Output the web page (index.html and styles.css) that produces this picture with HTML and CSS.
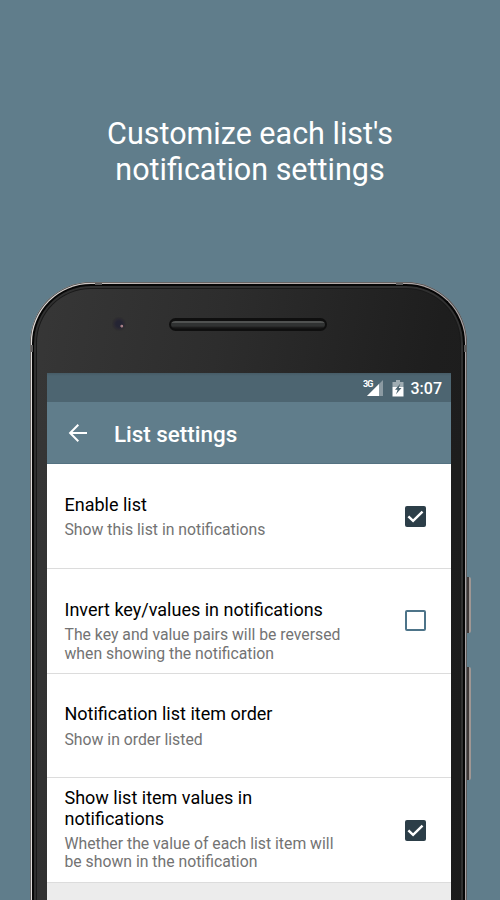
FILE: index.html
```html
<!DOCTYPE html>
<html lang="en">
<head>
<meta charset="utf-8">
<title>List settings</title>
<link rel="stylesheet" href="styles.css">
</head>
<body>
<main class="promo">
  <h1 class="headline">Customize each list's<br>notification settings</h1>
  <div class="phone">
    <span class="band band-top-left"></span><span class="band band-top-right"></span>
    <span class="band band-left"></span><span class="band band-right"></span>
    <span class="button power"></span><span class="button volume"></span>
    <div class="body">
      <div class="face">
        <div class="bezel">
          <span class="camera"></span>
          <span class="speaker"></span>
        </div>
        <div class="screen">
          <div class="status">
            <svg class="signal" viewBox="0 0 22 20"><text x="0" y="8.500" class="net" textLength="10.500">3G</text><path d="M20 2V18H4z" fill="#fff" opacity=".35"/><path d="M16 6V18H4z" fill="#fff"/></svg>
            <svg class="battery" viewBox="0 0 12 18"><path d="M.5 3H4V1H8V3H11.500V8H.5z" fill="#a0adb3"/><path d="M.5 8H11.500V17.500H.5z" fill="#fff"/><path d="M8.400 4.500 3 10.800H5.600L4 15.300 9.500 9.100H6.800z" fill="#4c6470"/></svg>
            <span class="time">3:07</span>
          </div>
          <header class="toolbar">
            <svg class="back" viewBox="0 0 20 20"><path d="M19 10H2.500M10.300 1.800 2.100 10 10.300 18.200" fill="none" stroke="#fff" stroke-width="2"/></svg>
            <span class="title">List settings</span>
          </header>
          <ul class="rows">
            <li class="row">
              <div class="text"><div class="name">Enable list</div><div class="desc">Show this list in notifications</div></div>
              <span class="box on"><svg viewBox="0 0 20 20"><path d="M3.200 9.800 7.700 14.200 16.700 5.300" fill="none" stroke="#fff" stroke-width="2.300"/></svg></span>
            </li>
            <li class="row">
              <div class="text"><div class="name">Invert key/values in notifications</div><div class="desc">The key and value pairs will be reversed<br>when showing the notification</div></div>
              <span class="box"></span>
            </li>
            <li class="row">
              <div class="text"><div class="name">Notification list item order</div><div class="desc">Show in order listed</div></div>
            </li>
            <li class="row tall">
              <div class="text"><div class="name">Show list item values in<br>notifications</div><div class="desc">Whether the value of each list item will<br>be shown in the notification</div></div>
              <span class="box on"><svg viewBox="0 0 20 20"><path d="M3.200 9.800 7.700 14.200 16.700 5.300" fill="none" stroke="#fff" stroke-width="2.300"/></svg></span>
            </li>
          </ul>
        </div>
      </div>
    </div>
  </div>
</main>
</body>
</html>
```
FILE: styles.css
```css
* { box-sizing: border-box; }
body { margin: 0; background: #607d8b; font-family: Roboto, sans-serif; }
.promo { height: 900px; overflow: hidden; }
.headline {
  margin: 0; padding-top: 116px; height: 282px;
  color: #fff; font-size: 30.500px; font-weight: 400; line-height: 36px; text-align: center;
}
.phone { position: relative; width: 437px; height: 700px; margin-left: 30px; }
.body {
  height: 100%; padding: 2px; border-radius: 61px 61px 0 0;
  background: linear-gradient(90deg, #e0dddb 0, #b3aaa8 30%, #b3aaa8 80%, #aaa4a6 100%);
  box-shadow: inset 0 0 0 .8px #4c4c4c;
}
.face {
  height: 100%; border: 2px solid #050505; border-bottom: 0; border-radius: 59px 59px 0 0;
  padding: 0 12px 0 12.500px;
  background: linear-gradient(100deg, #373737 0, #2d2d2d 35%, #1e1e1e 75%, #1b1b1b 100%);
  box-shadow: inset 0 0 0 2px #303030, inset 0 0 0 3px #1a1a1a;
}
.bezel { height: 87px; position: relative; }
.camera {
  position: absolute; left: 65px; top: 31px; width: 14px; height: 14px; border-radius: 50%;
  background: radial-gradient(circle at 70% 65%, #a77f86 0 1px, transparent 1.800px), radial-gradient(circle, #242433 0 3px, #2c2a32 5px, #303030 7px);
}
.speaker {
  position: absolute; left: 122.500px; top: 32px; width: 158px; height: 13px; border-radius: 7px;
  border: 2.500px solid #0f0f0f; border-top-width: 3px;
  background: linear-gradient(#505251 0 2px, #303232 2.500px 5px, #151515 7px);
}
.band { position: absolute; z-index: 1; background: #5d5c5c; }
.band-top-left { left: 65px; top: 1px; width: 7px; height: 2px; }
.band-top-right { right: 64px; top: 1px; width: 7px; height: 2px; }
.band-left { left: 1px; top: 63px; width: 2px; height: 7px; }
.band-right { right: 1px; top: 63px; width: 2px; height: 7px; }
.button { position: absolute; left: 437px; width: 3.500px; border-radius: 0 2px 2px 0; background: linear-gradient(90deg, #403938 0 1.600px, #a09794 2px); }
.power { top: 295px; height: 56px; }
.volume { top: 385px; height: 113px; }
.screen { height: 600px; background: #ececec; }
.status { height: 29px; background: linear-gradient(#465b66 0, #4d6571 3px); display: flex; align-items: center; padding-right: 9px; justify-content: flex-end; color: #fff; }
.signal { width: 22px; height: 20px; }
.net { font: 700 9px Roboto, sans-serif; fill: #fff; }
.battery { width: 12px; height: 18px; margin: 0 7px 0 7px; }
.time { font-size: 16px; font-weight: 500; line-height: 29px; padding-top: 1px; }
.toolbar { height: 62px; background: #607d8b; display: flex; align-items: center; padding-left: 21px; color: #fff; border-bottom: 1px solid #547281; }
.back { width: 20px; height: 20px; margin-right: 26.500px; }
.title { font-size: 22.400px; font-weight: 500; line-height: 28px; padding-top: 2px; }
.rows { list-style: none; margin: 0; padding: 0; background: #fff; padding-top: .5px; }
.row { height: 104.600px; background: #fff; border-bottom: 1.500px solid #dcdcdc; padding: 0 25.500px 0 18px; display: flex; justify-content: space-between; align-items: center; }
.text { align-self: flex-start; padding-top: 29.800px; white-space: nowrap; }
.tall .text { padding-top: 9px; }
.name { font-size: 18px; line-height: 21px; color: #000; }
.desc { font-size: 15.770px; line-height: 18.500px; color: #737373; padding-top: 6.200px; }
.tall .desc { padding-top: 5.700px; }
.box { width: 21px; height: 21px; border: 2px solid #4d7489; border-radius: 2px; }
.box.on { border: 0; background: #2c3e48; }
.box svg { display: block; width: 21px; height: 21px; }
```
